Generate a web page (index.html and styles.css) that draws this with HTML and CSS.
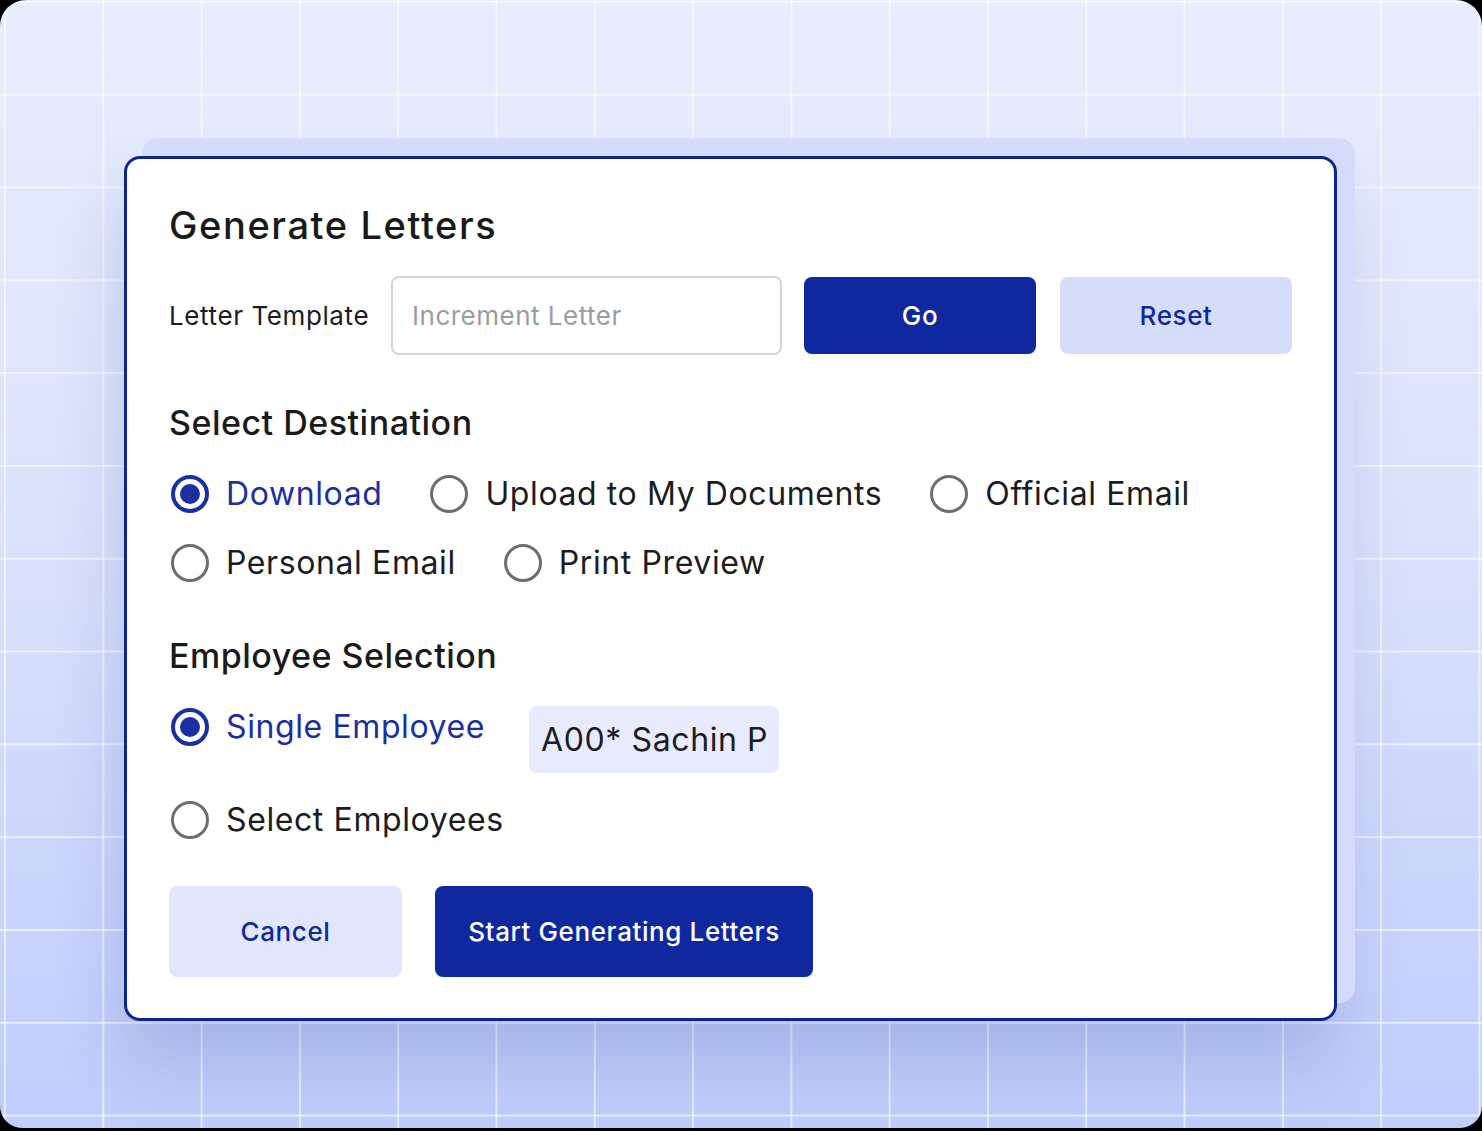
FILE: index.html
```html
<!DOCTYPE html>
<html lang="en">
<head>
    <meta charset="utf-8">
    <title>Generate Letters</title>
    <link rel="stylesheet" href="styles.css">
</head>
<body>
    <div class="frame">
        <div class="dialog">
            <h1 class="dialog-title">Generate Letters</h1>

            <div class="template-row">
                <label class="field-label" for="templateInput">Letter Template</label>
                <input class="field" id="templateInput" type="text" placeholder="Increment Letter">
                <button class="btn btn-primary btn-row">Go</button>
                <button class="btn btn-soft btn-row">Reset</button>
            </div>

            <h2 class="section-title">Select Destination</h2>
            <div class="option-list destinations">
                <label class="option checked"><span class="radio"></span>Download</label>
                <label class="option"><span class="radio"></span>Upload to My Documents</label>
                <label class="option"><span class="radio"></span>Official Email</label>
                <label class="option"><span class="radio"></span>Personal Email</label>
                <label class="option"><span class="radio"></span>Print Preview</label>
            </div>

            <h2 class="section-title employees-title">Employee Selection</h2>
            <div class="employee-row">
                <label class="option checked"><span class="radio"></span>Single Employee</label>
                <span class="chip">A00* Sachin P</span>
            </div>
            <div class="employee-row second">
                <label class="option"><span class="radio"></span>Select Employees</label>
            </div>

            <div class="actions">
                <button class="btn btn-soft btn-cancel">Cancel</button>
                <button class="btn btn-primary btn-start">Start Generating Letters</button>
            </div>
        </div>
    </div>
</body>
</html>
```

FILE: styles.css
```css
* {
    margin: 0;
    padding: 0;
    box-sizing: border-box;
}

body {
    background: #000;
    font-family: Inter, "Noto Sans", Roboto, sans-serif;
    color: #1c1c1e;
}

/* light blue canvas with a faint white grid */
.frame {
    width: 1482px;
    height: 1128px;
    border-radius: 26px 26px 22px 22px;
    padding: 156px 0 0 124px;
    background-color: #d6defc;
    background-image:
        linear-gradient(to right, rgba(255, 255, 255, 0.6) 2px, transparent 2px),
        linear-gradient(to bottom, rgba(255, 255, 255, 0.6) 2px, transparent 2px),
        linear-gradient(to bottom, #e8edfd 0%, #dbe3fc 45%, #bfcdfb 100%);
    background-size: 98.3px 92.8px, 98.3px 92.8px, 100% 100%;
    background-position: 4px 1px, 4px 1px, 0 0;
    overflow: hidden;
}

.dialog {
    width: 1213px;
    height: 865px;
    background: #fff;
    border: 3px solid #0d2494;
    border-radius: 16px;
    padding: 43px 42px 41px;
    box-shadow:
        18px -18px 0 0 #d5dcfb,
        0 40px 70px rgba(40, 60, 150, 0.2);
}

.dialog-title {
    font-size: 38px;
    line-height: 46px;
    font-weight: 500;
    letter-spacing: 1.6px;
    color: #1a1a1a;
}

.template-row {
    display: flex;
    align-items: center;
    margin-top: 28px;
}

.field-label {
    font-size: 26px;
    letter-spacing: 0.6px;
    color: #1c1c1e;
    width: 223px;
}

.field {
    width: 391px;
    height: 79px;
    border: 2px solid #d5d5d7;
    border-radius: 8px;
    padding: 0 19px;
    font-family: inherit;
    font-size: 26px;
    letter-spacing: 0.5px;
    color: #1c1c1e;
    outline: none;
}

.field::placeholder {
    color: #9c9c9f;
}

.btn {
    border: none;
    border-radius: 8px;
    font-family: inherit;
    font-size: 26px;
    font-weight: 500;
    letter-spacing: 0.6px;
    cursor: pointer;
}

.btn-primary {
    background: #10289e;
    color: #fff;
}

.btn-soft {
    background: #d6ddfb;
    color: #10289e;
}

.btn-row {
    width: 233px;
    height: 77px;
    margin-left: 22px;
}

.btn-row + .btn-row {
    margin-left: 24px;
}

.section-title {
    font-size: 34px;
    line-height: 42px;
    font-weight: 500;
    letter-spacing: 0.5px;
    color: #1a1a1a;
    margin-top: 47px;
}

.employees-title {
    margin-top: 53px;
}

.option-list {
    display: flex;
    flex-wrap: wrap;
    column-gap: 46px;
    row-gap: 31px;
    margin-top: 31px;
    max-width: 1080px;
}

.option {
    display: flex;
    align-items: center;
    gap: 17px;
    font-size: 32px;
    line-height: 38px;
    letter-spacing: 0.6px;
    color: #1c1c1e;
    white-space: nowrap;
    cursor: pointer;
}

.option.checked {
    color: #1a2fa0;
}

.radio {
    position: relative;
    width: 38px;
    height: 38px;
    flex: none;
    border: 3px solid #6e6e72;
    border-radius: 50%;
    margin-left: 2px;
}

.option.checked .radio {
    border: 4px solid #1a2fa0;
}

.option.checked .radio::after {
    content: "";
    position: absolute;
    top: 5px;
    left: 5px;
    width: 20px;
    height: 20px;
    border-radius: 50%;
    background: #1a2fa0;
}

.employee-row {
    display: flex;
    align-items: flex-start;
    gap: 44px;
    margin-top: 29px;
}

.employee-row .option {
    margin-top: 2px;
}

.employee-row.second {
    margin-top: 28px;
}

.employee-row.second .option {
    margin-top: 0;
}

.chip {
    display: flex;
    align-items: center;
    height: 67px;
    width: 250px;
    padding: 0 12px;
    background: #e7ebfd;
    border-radius: 8px;
    font-size: 32px;
    letter-spacing: 0.6px;
    white-space: nowrap;
    color: #1c1c1e;
}

.actions {
    display: flex;
    gap: 33px;
    margin-top: 47px;
}

.btn-cancel {
    width: 233px;
    height: 91px;
    background: #e1e6fc;
}

.btn-start {
    width: 378px;
    height: 91px;
}
```
